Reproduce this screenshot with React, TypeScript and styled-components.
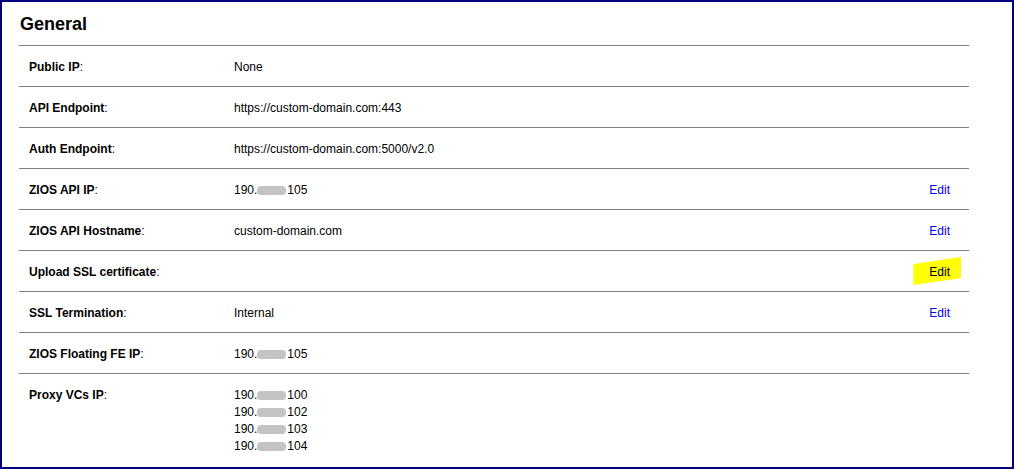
import styled, { createGlobalStyle } from 'styled-components';

const GlobalStyle = createGlobalStyle`
  html, body {
    margin: 0;
    padding: 0;
    background: #ffffff;
  }
  body {
    font-family: 'Liberation Sans', Arial, sans-serif;
    color: #000000;
  }
`;

const Frame = styled.div`
  box-sizing: border-box;
  width: 1014px;
  height: 469px;
  border: 2px solid #000080;
  background: #ffffff;
  padding: 11px 43px 0 17px;
  overflow: hidden;
`;

const Title = styled.h2`
  margin: 0 0 10px 1px;
  font-size: 18px;
  line-height: 22px;
  font-weight: bold;
`;

const Table = styled.div`
  display: flex;
  flex-direction: column;
  border-top: 1px solid #808080;
`;

const Row = styled.div<{ $last?: boolean }>`
  display: grid;
  grid-template-columns: 205px 1fr auto;
  padding: 13px 19px 10px 10px;
  min-height: 17px;
  font-size: 12px;
  line-height: 17px;
  border-bottom: ${(p) => (p.$last ? 'none' : '1px solid #808080')};
`;

const Label = styled.div`
  font-weight: bold;
  span {
    font-weight: normal;
  }
`;

const Value = styled.div`
  display: flex;
  flex-direction: column;
`;

const Masked = styled.span<{ $w: number }>`
  display: inline-block;
  width: ${(p) => p.$w}px;
  height: 9px;
  margin: 0 1px 0 0;
  vertical-align: -1px;
  background: #c4c4c4;
  border-radius: 4px;
`;

const EditLink = styled.a<{ $marked?: boolean }>`
  position: relative;
  color: ${(p) => (p.$marked ? '#000000' : '#0000ff')};
  text-decoration: none;
  cursor: pointer;
  z-index: 0;
  &::before {
    content: '';
    display: ${(p) => (p.$marked ? 'block' : 'none')};
    position: absolute;
    left: -16px;
    top: -8px;
    width: 48px;
    height: 28px;
    background: #ffff00;
    clip-path: polygon(0 7px, 100% 0, 100% 21px, 0 100%);
    z-index: -1;
  }
`;

const Ip = ({ tail, w = 29 }: { tail: string; w?: number }) => (
  <div>
    190.
    <Masked $w={w} />
    {tail}
  </div>
);

type RowData = {
  label: string;
  value?: React.ReactNode;
  edit?: 'plain' | 'marked';
};

const rows: RowData[] = [
  { label: 'Public IP', value: 'None' },
  { label: 'API Endpoint', value: 'https://custom-domain.com:443' },
  { label: 'Auth Endpoint', value: 'https://custom-domain.com:5000/v2.0' },
  { label: 'ZIOS API IP', value: <Ip tail="105" />, edit: 'plain' },
  { label: 'ZIOS API Hostname', value: 'custom-domain.com', edit: 'plain' },
  { label: 'Upload SSL certificate', edit: 'marked' },
  { label: 'SSL Termination', value: 'Internal', edit: 'plain' },
  { label: 'ZIOS Floating FE IP', value: <Ip tail="105" /> },
  {
    label: 'Proxy VCs IP',
    value: (
      <>
        <Ip tail="100" />
        <Ip tail="102" />
        <Ip tail="103" />
        <Ip tail="104" />
      </>
    ),
  },
];

export default function App() {
  return (
    <>
      <GlobalStyle />
      <Frame>
        <Title>General</Title>
        <Table>
          {rows.map((r, i) => (
            <Row key={r.label} $last={i === rows.length - 1}>
              <Label>
                {r.label}
                <span>:</span>
              </Label>
              <Value>{r.value}</Value>
              <div>
                {r.edit && <EditLink $marked={r.edit === 'marked'}>Edit</EditLink>}
              </div>
            </Row>
          ))}
        </Table>
      </Frame>
    </>
  );
}
